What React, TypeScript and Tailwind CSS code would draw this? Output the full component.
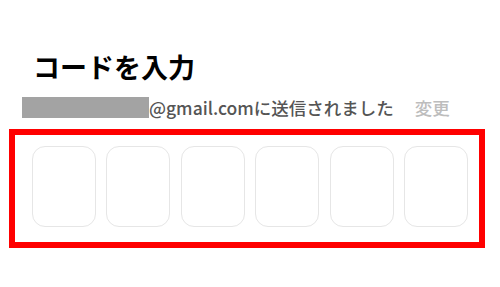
const CodeInput = () => {
	const digits = ['', '', '', '', '', ''];

	return (
		<div className="w-[500px] h-[287px] bg-white overflow-hidden font-['Noto_Sans_CJK_JP','Noto_Sans',sans-serif]">
			<div className="pt-[52px] pl-[22px]">
				<h1 className="ml-[11px] text-[27px] leading-[30px] font-bold text-black">
					コードを入力
				</h1>
				<div className="mt-[15px] flex items-center h-[21px] text-[17.5px] leading-[21px] font-medium">
					<span className="w-[127px] h-[21px] bg-[#a3a3a3]" />
					<span className="text-[#555555]">@gmail.comに送信されました</span>
					<button className="ml-[21px] text-[#bdbdbd]">変更</button>
				</div>
			</div>
			<div className="mt-[11px] ml-[9px] mr-[15px] border-[6px] border-[#ff0000] pt-[11px] pb-[15px] pl-[17px] pr-[11px]">
				<div className="flex justify-between">
					{digits.map((d, i) => (
						<input
							key={i}
							value={d}
							readOnly
							maxLength={1}
							className="w-[64px] h-[81px] rounded-[13px] border-[1.5px] border-[#e6e6e6] text-center text-[28px] outline-none"
						/>
					))}
				</div>
			</div>
		</div>
	);
};

export default function App() {
	return <CodeInput />;
}
